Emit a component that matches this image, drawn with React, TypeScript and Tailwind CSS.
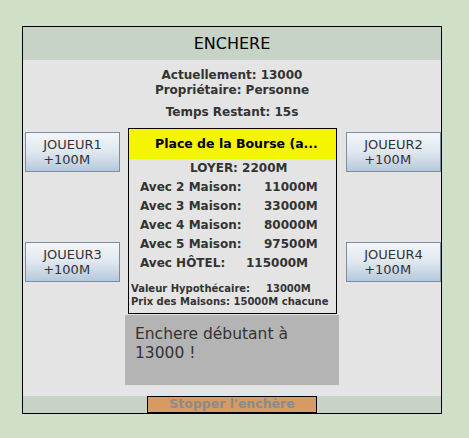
import React from "react";

const font = { fontFamily: '"DejaVu Sans", Verdana, sans-serif' };

function PlayerButton({ name }: { name: string }) {
  return (
    <div className="w-[95px] h-[40px] border border-[#7b8da0] bg-gradient-to-b from-[#f4f6f9] via-[#dfe7ef] to-[#b6c9dc] flex items-center justify-center text-[13px] leading-[15px] text-[#333333]">
      <div className="text-left">
        <div>{name}</div>
        <div>+100M</div>
      </div>
    </div>
  );
}

function PriceRow({ label, value, w }: { label: string; value: string; w: string }) {
  return (
    <div className="flex h-[19px] items-center leading-[19px]">
      <div className={w}>{label}</div>
      <div>{value}</div>
    </div>
  );
}

export default function App() {
  return (
    <div style={font} className="w-[469px] h-[438px] bg-[#cfdfc8] pt-[26px] pl-[22px]">
      <div className="w-[420px] h-[388px] border border-black flex flex-col">
        <div className="h-[33px] bg-[#c8d3c7] flex items-center justify-center text-[16px] text-black">
          ENCHERE
        </div>
        <div className="flex-1 bg-[#e4e4e4] pt-[8px] flex flex-col">
          <div className="text-center text-[12px] font-bold leading-[15px] text-[#333333]">
            <div>Actuellement: 13000</div>
            <div>Propriétaire: Personne</div>
            <div className="mt-[7px]">Temps Restant: 15s</div>
          </div>
          <div className="flex items-start mt-[8px]">
            <div className="ml-[2px] w-[95px] mt-[4px] flex flex-col gap-[70px]">
              <PlayerButton name="JOUEUR1" />
              <PlayerButton name="JOUEUR3" />
            </div>
            <div className="ml-[5px] w-[214px] flex flex-col">
              <div className="ml-[3px] w-[209px] h-[186px] border border-black flex flex-col text-[#333333] font-bold">
                <div className="h-[30px] bg-[#f5f500] flex items-center pl-[26px] text-[12.5px] text-black">
                  Place de la Bourse (a...
                </div>
                <div className="px-[11px] text-[12px]">
                  <div className="h-[19px] leading-[19px] pl-[50px]">LOYER: 2200M</div>
                  <PriceRow label="Avec 2 Maison:" value="11000M" w="w-[124px]" />
                  <PriceRow label="Avec 3 Maison:" value="33000M" w="w-[124px]" />
                  <PriceRow label="Avec 4 Maison:" value="80000M" w="w-[124px]" />
                  <PriceRow label="Avec 5 Maison:" value="97500M" w="w-[124px]" />
                  <PriceRow label="Avec HÔTEL:" value="115000M" w="w-[106px]" />
                </div>
                <div className="mt-[9px] pl-[2px] text-[10px] leading-[13px]">
                  <div className="flex">
                    <div className="w-[135px]">Valeur Hypothécaire:</div>
                    <div>13000M</div>
                  </div>
                  <div>Prix des Maisons: 15000M chacune</div>
                </div>
              </div>
              <div className="mt-[1px] h-[70px] bg-[#b4b4b4] pt-[10px] pl-[10px] text-[15.5px] leading-[19px] text-[#333333]">
                <div>Enchere débutant à</div>
                <div>13000 !</div>
              </div>
            </div>
            <div className="ml-[7px] w-[95px] mt-[4px] flex flex-col gap-[70px]">
              <PlayerButton name="JOUEUR2" />
              <PlayerButton name="JOUEUR4" />
            </div>
          </div>
        </div>
        <div className="h-[17px] bg-[#c8d3c7] flex justify-center">
          <div className="w-[170px] h-[17px] border border-black bg-[#d69a62] flex items-center justify-center text-[12.5px] font-bold text-[#8b8b8b] leading-none">
            Stopper l'enchère
          </div>
        </div>
      </div>
    </div>
  );
}
